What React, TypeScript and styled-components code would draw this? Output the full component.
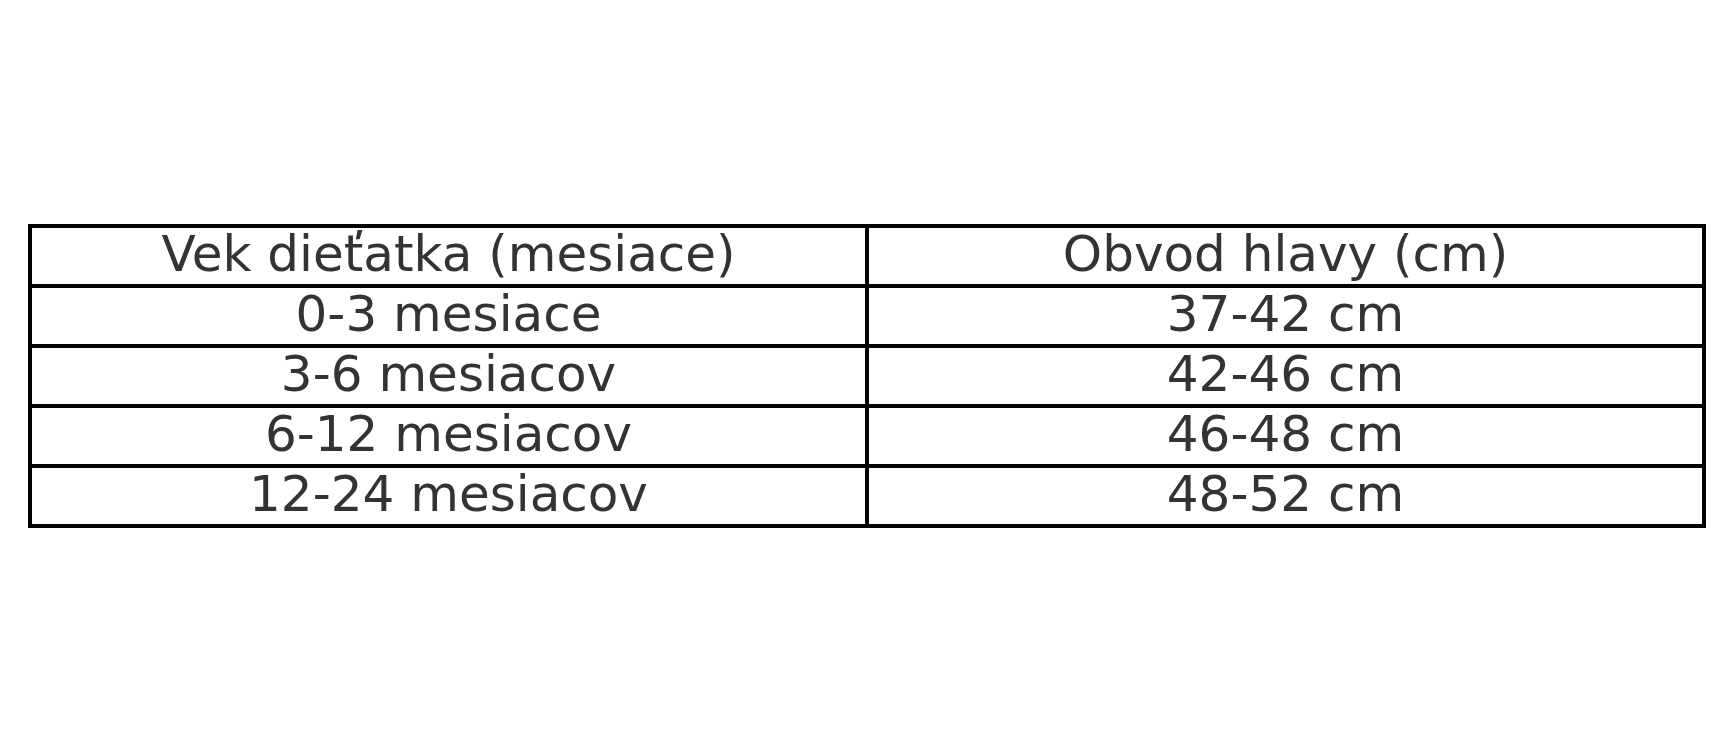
import React from "react";
import styled, { createGlobalStyle } from "styled-components";

const Global = createGlobalStyle`
  html, body { margin: 0; padding: 0; background: #ffffff; }
  body { font-family: "DejaVu Sans", "Liberation Sans", sans-serif; }
`;

const Page = styled.div`
  width: 1733px;
  height: 753px;
  box-sizing: border-box;
  padding: 224px 0 0 28px;
  background: #ffffff;
`;

const Table = styled.div`
  display: grid;
  grid-template-columns: 833px 833px;
  grid-auto-rows: 56px;
  gap: 4px;
  padding: 4px;
  width: 1678px;
  box-sizing: border-box;
  background: #000000;
`;

const Cell = styled.div`
  background: #ffffff;
  display: flex;
  align-items: center;
  justify-content: center;
  box-sizing: border-box;
  padding-bottom: 5px;
  font-family: "DejaVu Sans", sans-serif;
  font-size: 50px;
  line-height: 1;
  color: #333333;
  white-space: nowrap;
`;

const rows: [string, string][] = [
  ["Vek dieťatka (mesiace)", "Obvod hlavy (cm)"],
  ["0-3 mesiace", "37-42 cm"],
  ["3-6 mesiacov", "42-46 cm"],
  ["6-12 mesiacov", "46-48 cm"],
  ["12-24 mesiacov", "48-52 cm"],
];

export default function App() {
  return (
    <>
      <Global />
      <Page>
        <Table>
          {rows.map(([a, b], i) => (
            <React.Fragment key={i}>
              <Cell>{a}</Cell>
              <Cell>{b}</Cell>
            </React.Fragment>
          ))}
        </Table>
      </Page>
    </>
  );
}
